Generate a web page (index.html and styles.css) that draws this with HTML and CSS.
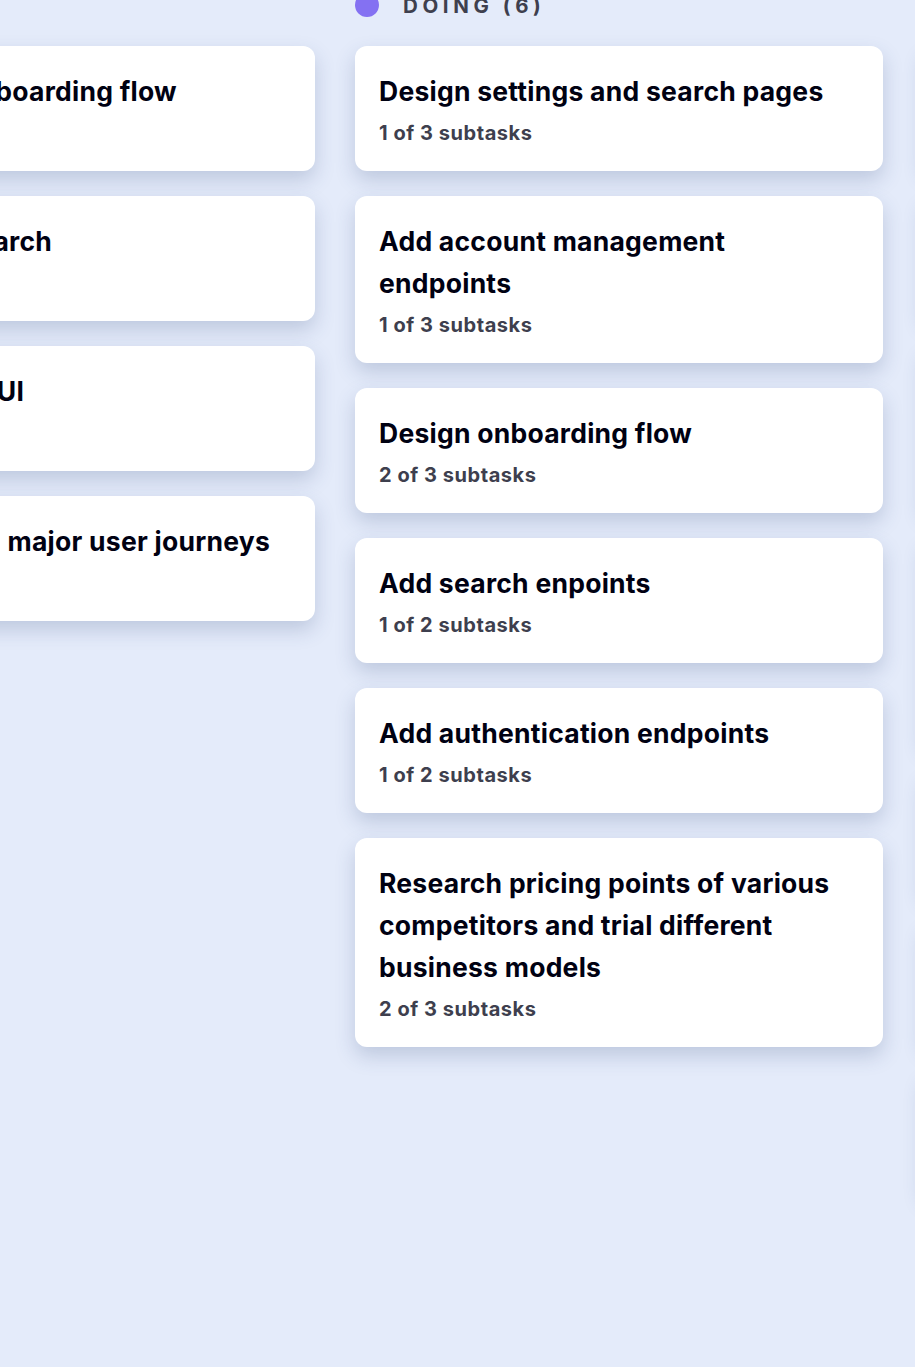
FILE: index.html
```html
<!DOCTYPE html>
<html lang="en">
<head>
<meta charset="utf-8">
<title>Platform Launch</title>
<link rel="stylesheet" href="styles.css">
</head>
<body>
<main class="board">
  <section class="column">
    <h2 class="column-head"><span class="dot dot-todo"></span>TODO (4)</h2>
    <ul class="cards">
      <li class="card"><h3 class="card-title">Build UI for onboarding flow</h3><p class="card-sub">0 of 3 subtasks</p></li>
      <li class="card"><h3 class="card-title">Build UI for search</h3><p class="card-sub">0 of 1 subtasks</p></li>
      <li class="card"><h3 class="card-title">Build settings UI</h3><p class="card-sub">0 of 2 subtasks</p></li>
      <li class="card"><h3 class="card-title">QA and test all major user journeys</h3><p class="card-sub">0 of 2 subtasks</p></li>
    </ul>
  </section>
  <section class="column">
    <h2 class="column-head"><span class="dot dot-doing"></span>DOING (6)</h2>
    <ul class="cards">
      <li class="card"><h3 class="card-title">Design settings and search pages</h3><p class="card-sub">1 of 3 subtasks</p></li>
      <li class="card"><h3 class="card-title">Add account management endpoints</h3><p class="card-sub">1 of 3 subtasks</p></li>
      <li class="card"><h3 class="card-title">Design onboarding flow</h3><p class="card-sub">2 of 3 subtasks</p></li>
      <li class="card"><h3 class="card-title">Add search enpoints</h3><p class="card-sub">1 of 2 subtasks</p></li>
      <li class="card"><h3 class="card-title">Add authentication endpoints</h3><p class="card-sub">1 of 2 subtasks</p></li>
      <li class="card"><h3 class="card-title">Research pricing points of various competitors and trial different business models</h3><p class="card-sub">2 of 3 subtasks</p></li>
    </ul>
  </section>
  <section class="column">
    <h2 class="column-head"><span class="dot dot-done"></span>DONE (7)</h2>
    <ul class="cards">
      <li class="card"><h3 class="card-title">Conduct 5 wireframe tests</h3><p class="card-sub">1 of 1 subtasks</p></li>
      <li class="card"><h3 class="card-title">Create wireframe prototype</h3><p class="card-sub">1 of 1 subtasks</p></li>
      <li class="card"><h3 class="card-title">Review results of usability tests and iterate</h3><p class="card-sub">3 of 3 subtasks</p></li>
      <li class="card"><h3 class="card-title">Create paper prototypes and conduct 10 usability tests with potential customers</h3><p class="card-sub">2 of 2 subtasks</p></li>
      <li class="card"><h3 class="card-title">Market discovery</h3><p class="card-sub">1 of 1 subtasks</p></li>
      <li class="card"><h3 class="card-title">Competitor analysis</h3><p class="card-sub">2 of 2 subtasks</p></li>
      <li class="card"><h3 class="card-title">Research the market</h3><p class="card-sub">2 of 2 subtasks</p></li>
    </ul>
  </section>
</main>
</body>
</html>
```
FILE: styles.css
```css
* { box-sizing: border-box; }
html, body { margin: 0; padding: 0; }
body {
  background: #e4ebfa;
  font-family: Inter, "Liberation Sans", sans-serif;
  overflow: hidden;
  height: 1367px;
}
.board {
  display: flex;
  gap: 40px;
  margin-left: -213px;
  margin-top: -15px;
}
.column {
  flex: 0 0 528px;
  width: 528px;
}
.column-head {
  display: flex;
  align-items: center;
  gap: 24px;
  height: 40px;
  margin: 0 0 21px;
  font-size: 20.5px;
  font-weight: 700;
  letter-spacing: 4.6px;
  color: #3e3f4e;
}
.dot {
  width: 24px;
  height: 24px;
  border-radius: 50%;
  flex: none;
}
.dot-todo { background: #49c4e5; }
.dot-doing { background: #8471f2; }
.dot-done { background: #67e2ae; }
.cards {
  list-style: none;
  margin: 0;
  padding: 0;
  display: flex;
  flex-direction: column;
  gap: 25px;
}
.card {
  background: #fff;
  border-radius: 12px;
  padding: 24px;
  box-shadow: 0 9px 20px rgba(54, 78, 126, 0.22);
}
.card-title {
  margin: 0;
  font-size: 26.5px;
  line-height: 42px;
  font-weight: 700;
  letter-spacing: 0.25px;
  color: #000112;
}
.card-sub {
  margin: 7px 0 0;
  font-size: 20px;
  line-height: 28px;
  font-weight: 700;
  letter-spacing: 0.55px;
  color: #3e3f4e;
}
```
